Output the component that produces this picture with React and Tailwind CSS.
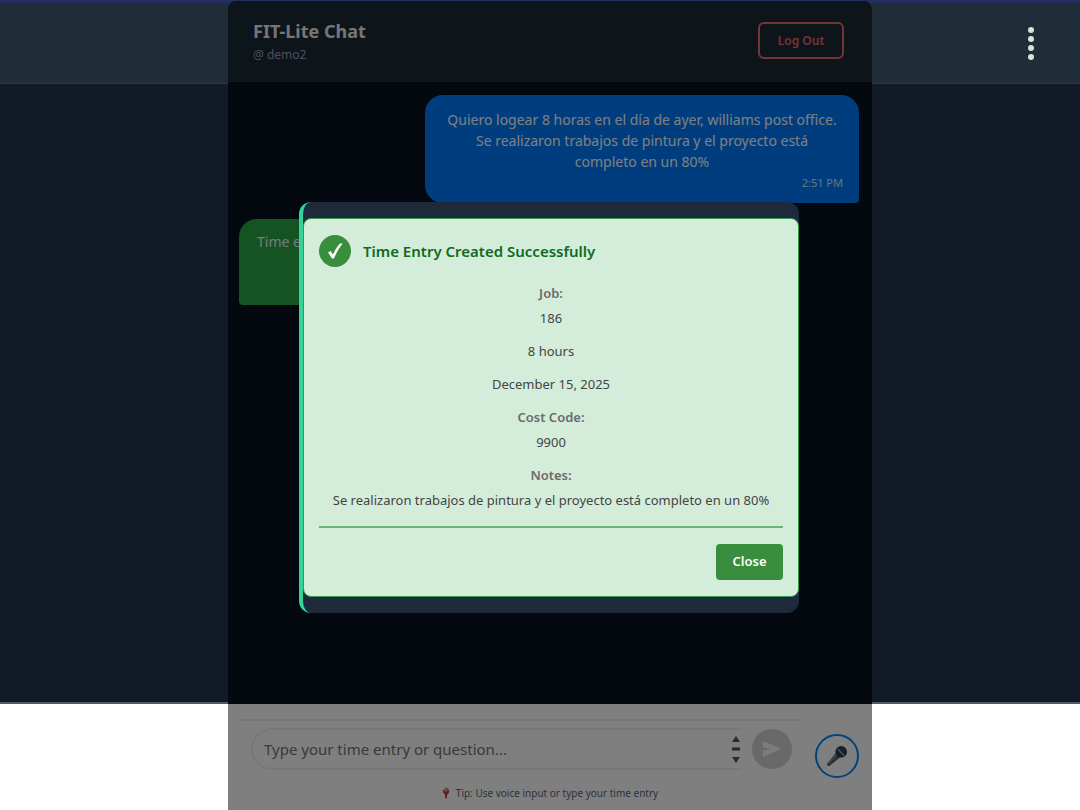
const DETAILS = [
  { label: 'Job:', value: '186' },
  { value: '8 hours' },
  { value: 'December 15, 2025' },
  { label: 'Cost Code:', value: '9900' },
  { label: 'Notes:', value: 'Se realizaron trabajos de pintura y el proyecto está completo en un 80%' },
]

function SideColumn({ className, children }) {
  return (
    <div className={`flex flex-col ${className}`}>
      <div className="h-[84px] flex justify-end border-t-3 border-t-[#222f5f] border-b border-b-[#28374a] bg-[#212c39]">
        {children}
      </div>
      <div className="flex-1 bg-[#131a27] border-b-2 border-[#4b5c66]" />
      <div className="h-[106px] bg-white" />
    </div>
  )
}

function MicIcon() {
  return (
    <svg width="24" height="24" viewBox="0 0 24 24" aria-hidden="true">
      <path d="M2.2 19.4 11.2 8.6l4.4 4.4L4.6 21.8c-1.500.7-3.100-.8-2.400-2.400z" fill="#59616b" />
      <path d="M3.400 19.600 12 10" stroke="#939ba3" strokeWidth="1.200" />
      <circle cx="16.200" cy="7.800" r="5.800" fill="#26384e" />
      <path d="M12.600 4.800 19.400 11.800" stroke="#8796a5" strokeWidth="1.800" />
      <path d="M15.800 3.600 20.600 8.200" stroke="#4e6072" strokeWidth="0.800" />
    </svg>
  )
}

function TinyMic() {
  return (
    <svg width="8" height="12" viewBox="0 0 8 12" aria-hidden="true">
      <circle cx="4.500" cy="2.800" r="2.300" fill="#b0a0a0" />
      <path d="M.5 2.500 2.500 3.500 4 5.500 5.500 3.500 7.500 3.500 6.500 6.500 5.200 7.500 4.800 11.500H3.300L3 7.500 1.500 6z" fill="#c03a36" />
    </svg>
  )
}

function ChatHeader() {
  return (
    <header className="h-[81px] flex items-start justify-between pl-[25px] pr-7 pt-5 rounded-t-lg bg-[#1a2834] border-b border-[#1e3040]">
      <div>
        <h1 className="text-lg leading-5 font-bold text-[#ececec]">FIT-Lite Chat</h1>
        <p className="mt-1 text-xs leading-5 text-[#94a0b4]">@ demo2</p>
      </div>
      <button
        type="button"
        className="mt-px h-[37px] w-[86px] rounded-md border-2 border-[#e66a6a] text-xs font-semibold text-[#e66a6a]"
      >
        Log Out
      </button>
    </header>
  )
}

function Messages() {
  return (
    <main className="flex-1 flex flex-col pl-[11px] pr-[13px] pt-[13px] bg-[#081220]">
      <div className="self-end w-[434px] max-w-full px-4 pt-[14px] pb-3 rounded-[18px] rounded-br-sm bg-[#007bff] text-white">
        <p className="px-1 text-center text-sm leading-[21px]">
          Quiero logear 8 horas en el día de ayer, williams post office. Se realizaron trabajos de
          pintura y el proyecto está completo en un 80%
        </p>
        <p className="mt-[3px] text-right text-[11px] leading-4 text-white/80">2:51 PM</p>
      </div>
      <div className="self-start mt-4 h-[86px] w-[240px] px-[18px] pt-3 rounded-[18px] rounded-bl-sm bg-[#28a745] text-white/90">
        <p className="text-sm leading-[21px]">Time entry created</p>
      </div>
    </main>
  )
}

function Composer() {
  return (
    <footer className="h-[106px] px-3 pt-[15px] bg-white">
      <div className="flex items-start gap-3">
        <form className="flex-1 flex items-center gap-[10px] pl-[11px] pr-[11px] pt-[7px] border-t-2 border-[#ececec]">
          <div className="flex-1 h-[42px] flex items-center rounded-l-[21px] border-2 border-r-0 border-[#f0f0f0]">
            <textarea
              aria-label="Message"
              rows={1}
              placeholder="Type your time entry or question..."
              className="flex-1 h-6 pl-[11px] text-[15px] leading-6 resize-none overflow-hidden bg-transparent outline-none placeholder:text-[#6c757d]"
            />
            <svg className="mr-px" width="10" height="30" viewBox="0 0 10 30" fill="#4d5863" aria-hidden="true">
              <path d="M5 2 9 8H1zM1 13.500h8v3H1zM1 23h8L5 29z" />
            </svg>
          </div>
          <button
            type="button"
            aria-label="Send"
            className="size-10 flex items-center justify-center rounded-full bg-[#d2d2d2]"
          >
            <svg width="20" height="18" viewBox="0 0 20 18" fill="#f8f8f8" aria-hidden="true">
              <path d="M1 1 19 9 1 17V10.500L9 9 1 7.500z" />
            </svg>
          </button>
        </form>
        <button
          type="button"
          aria-label="Voice input"
          className="mt-[15px] mr-px size-11 flex items-center justify-center rounded-full border-2 border-[#0087ff]"
        >
          <MicIcon />
        </button>
      </div>
      <p className="mt-[7px] flex items-center justify-center gap-[6px] text-[10px] leading-4 text-[#5c6873]">
        <TinyMic />
        Tip: Use voice input or type your time entry
      </p>
    </footer>
  )
}

function SuccessDialog() {
  return (
    <div
      role="dialog"
      aria-labelledby="entry-title"
      className="w-[500px] max-w-full py-4 rounded-xl border-l-4 border-[#34d399] bg-[#1e293b]"
    >
      <div className="py-4 px-[15px] rounded-lg border border-[#389a48] bg-[#d4edda]">
        <div className="flex items-center gap-3">
          <span className="size-8 flex items-center justify-center rounded-full bg-[#388e3c]">
            <svg width="18" height="20" viewBox="0 0 18 20" fill="#fff" aria-hidden="true">
              <path d="M2 11.500 4.500 10 7 13.500C9 9 11.500 5 14 2.500h2.700C13 7 10 12.500 8 17.500H6z" />
            </svg>
          </span>
          <h2 id="entry-title" className="text-[15px] leading-6 font-semibold text-[#0f6a1f]">
            Time Entry Created Successfully
          </h2>
        </div>
        <div className="mt-4 flex flex-col gap-3 text-center text-[13px] leading-[21px] text-[#444]">
          {DETAILS.map(({ label, value }) => (
            <div key={value} className="flex flex-col gap-1">
              {label && <span className="font-semibold text-[#6b6b6b]">{label}</span>}
              <span>{value}</span>
            </div>
          ))}
        </div>
        <div className="mt-[15px] pt-4 flex justify-end border-t-2 border-[#6bb577]">
          <button
            type="button"
            className="h-9 w-[67px] rounded bg-[#388e3c] text-[13px] font-semibold text-white"
          >
            Close
          </button>
        </div>
      </div>
    </div>
  )
}

export default function App() {
  return (
    <div className="min-h-screen flex bg-[#222f5f] font-['Noto_Sans',sans-serif]">
      <SideColumn className="flex-1" />
      <div className="relative w-[644px] flex flex-col pt-px">
        <ChatHeader />
        <Messages />
        <Composer />
        <div className="absolute inset-x-0 top-px bottom-0 flex items-center justify-center pt-1 pr-[2px] rounded-t-lg bg-black/50">
          <SuccessDialog />
        </div>
      </div>
      <SideColumn className="w-52">
        <button type="button" aria-label="Menu" className="mr-[45px] px-px pt-px">
          <svg width="6" height="34" viewBox="0 0 6 34" fill="#cfe8d8" aria-hidden="true">
            <circle cx="3" cy="3" r="3" />
            <circle cx="3" cy="12" r="3" />
            <circle cx="3" cy="21" r="3" />
            <circle cx="3" cy="30" r="3" />
          </svg>
        </button>
      </SideColumn>
    </div>
  )
}
